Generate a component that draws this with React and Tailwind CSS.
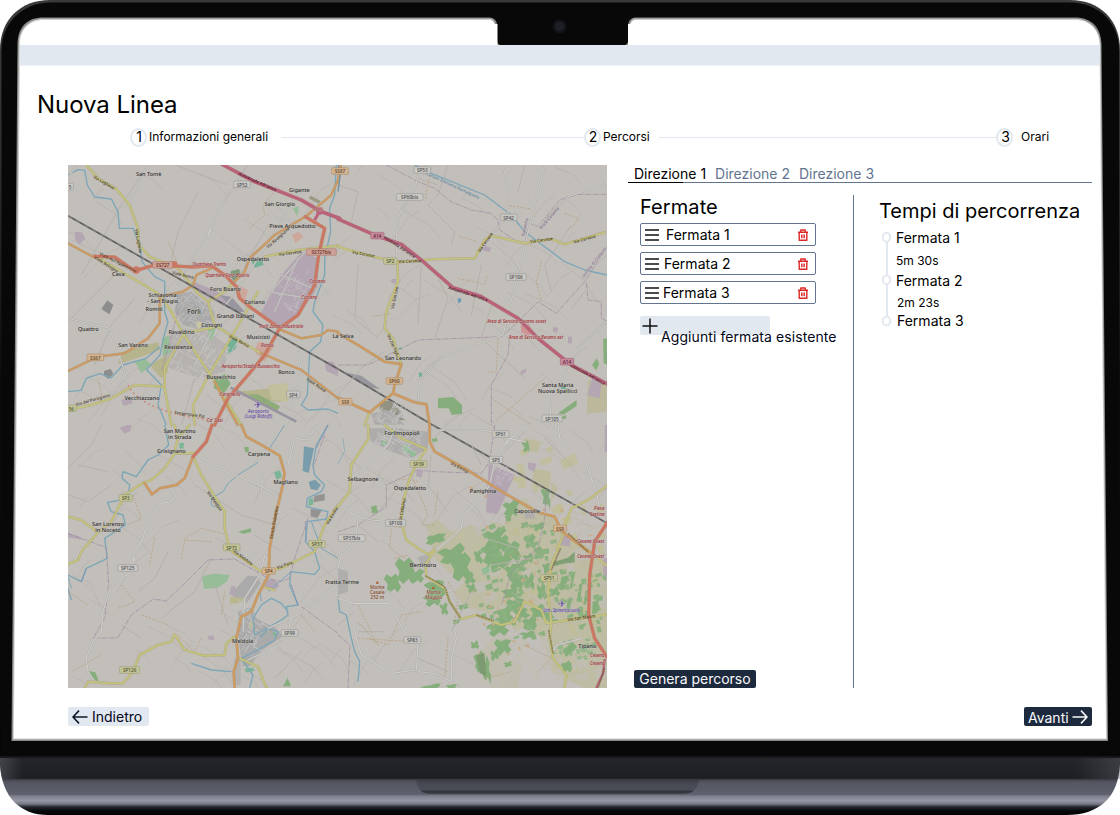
import React from "react";

/* ---------- Map ---------- */

const YELLOW = "#c3c27c";
const ORANGE = "#cd9a62";
const RED = "#cc7763";
const MOTORWAY = "#bb627b";
const WATER = "#7ba6b8";
const GREEN = "#86ae7c";

function rng(seed) {
  let s = seed;
  return () => {
    s = (s * 16807) % 2147483647;
    return s / 2147483647;
  };
}

function blob(x, y, w, h, r) {
  const outline = [
    [-1, -0.6], [-0.5, -0.9], [-0.1, -0.55], [0.5, -1], [1, -0.5], [0.65, 0],
    [1, 0.55], [0.4, 1], [0.1, 0.6], [-0.5, 0.95], [-0.95, 0.5], [-0.6, 0],
  ];
  return outline
    .map(([a, b]) => {
      const k = 0.75 + r() * 0.4;
      const px = (a * w * k) / 2;
      const py = (b * h * k) / 2;
      return `${(x + px + py * 0.15).toFixed(1)},${(y + py - px * 0.2).toFixed(1)}`;
    })
    .join(" ");
}

function parcel(x, y, w, h, t) {
  const c = Math.cos(t);
  const s = Math.sin(t);
  return [[-w, -h], [w, -h], [w * 0.8, h], [-w, h * 0.8]]
    .map(([a, b]) => `${(x + (a * c - b * s) / 2).toFixed(1)},${(y + (a * s + b * c) / 2).toFixed(1)}`)
    .join(" ");
}

function parcels(seed, n, x0, y0, x1, y1, size) {
  const r = rng(seed);
  return Array.from({ length: n }, () => {
    const x = x0 + r() * (x1 - x0);
    const y = y0 + r() * (y1 - y0);
    return parcel(x, y, size * (0.5 + r()), size * (0.4 + r() * 0.9), -0.45 + r() * 0.3);
  });
}

function Road({ d, c, w = 7, casing }) {
  return (
    <g fill="none" strokeLinejoin="round" strokeLinecap="round">
      <path d={d} stroke={casing || "#9c8f72"} strokeWidth={w + 2} opacity="0.55" />
      <path d={d} stroke={c} strokeWidth={w} />
    </g>
  );
}

function Minor({ d, w = 5 }) {
  return (
    <g fill="none" strokeLinejoin="round" strokeLinecap="round">
      <path d={d} stroke="#aaa8a6" strokeWidth={w + 2} />
      <path d={d} stroke="#cfcecb" strokeWidth={w} />
    </g>
  );
}

const Water = ({ d, w = 4 }) => <path d={d} fill="none" stroke={WATER} strokeWidth={w} strokeLinejoin="round" />;
const Lane = ({ d }) => <path d={d} fill="none" stroke="#b4b1ad" strokeWidth="3" />;
const Track = ({ d }) => <path d={d} fill="none" stroke="#b39b72" strokeWidth="1.8" strokeDasharray="7 4" />;
const Border = ({ d }) => <path d={d} fill="none" stroke="#a18fa4" strokeWidth="2.5" strokeDasharray="14 3 4 3" />;

function Label({ x, y, children, s = 17, c = "#2e2e2e", rot = 0, italic }) {
  return (
    <text
      x={x}
      y={y}
      textAnchor="middle"
      dominantBaseline="central"
      fontSize={s}
      fontStyle={italic ? "italic" : "normal"}
      fill={c}
      stroke="#c8c5c0"
      strokeWidth="1.5"
      paintOrder="stroke"
      transform={`rotate(${rot} ${x} ${y})`}
    >
      {children}
    </text>
  );
}

function Shield({ x, y, t, c = "#c9c8c4", b = "#8f8f8d", f = "#4b4b4b" }) {
  const w = t.length * 10 + 10;
  return (
    <g>
      <rect x={x - w / 2} y={y - 10} width={w} height="20" rx="3" fill={c} stroke={b} strokeWidth="1.5" />
      <text x={x} y={y + 1} textAnchor="middle" dominantBaseline="central" fontSize="14" fill={f}>
        {t}
      </text>
    </g>
  );
}
const yel = { c: "#c3c49a", b: "#94966a", f: "#4d4f2a" };
const org = { c: "#d2b493", b: "#a98258", f: "#5b3d1c" };
const pnk = { c: "#cfa096", b: "#a97368", f: "#5d2a20" };
const mag = { c: "#c58b9c", b: "#a35f76", f: "#5c1b33" };

function fieldLanes() {
  const r = rng(77);
  const out = [];
  for (let i = 0; i < 210; i++) {
    const x = r() * 1617;
    const y = r() * 1569;
    const steep = r() > 0.5;
    const l = 30 + r() * 75;
    const a = steep ? -1.1 + r() * 0.3 : 0.4 + r() * 0.3;
    const x2 = x + Math.cos(a) * l;
    const y2 = y + Math.sin(a) * l;
    const x3 = x2 + Math.cos(a + 0.4) * l * 0.6;
    const y3 = y2 + Math.sin(a + 0.4) * l * 0.6;
    out.push(`M${x.toFixed(0)} ${y.toFixed(0)}L${x2.toFixed(0)} ${y2.toFixed(0)}L${x3.toFixed(0)} ${y3.toFixed(0)}`);
  }
  return out.join("");
}

function cityGrid(cx, cy, rx, ry, n, seed) {
  const r = rng(seed);
  let d = "";
  for (let i = 0; i < n; i++) {
    const a = r() * 6.28;
    const q = Math.sqrt(r());
    const x = cx + Math.cos(a) * rx * q;
    const y = cy + Math.sin(a) * ry * q;
    const l = 10 + r() * 22;
    const t = r() > 0.5 ? -1.0 : 0.5;
    d += `M${x.toFixed(0)} ${y.toFixed(0)}l${(Math.cos(t) * l).toFixed(0)} ${(Math.sin(t) * l).toFixed(0)}`;
  }
  return d;
}

const woods = [
  [291, 342, 60, 32], [345, 390, 90, 56], [370, 430, 56, 76], [205, 435, 54, 74], [165, 475, 48, 56],
  [235, 455, 44, 36], [290, 490, 60, 52], [285, 525, 50, 35], [318, 553, 22, 36], [470, 340, 62, 54],
  [465, 385, 55, 60], [480, 415, 60, 34], [520, 380, 60, 70], [495, 350, 40, 40], [575, 352, 34, 40],
  [602, 305, 34, 24], [560, 300, 22, 20], [520, 250, 44, 44], [510, 280, 20, 22], [625, 215, 24, 60],
  [400, 490, 26, 28], [395, 460, 30, 34], [520, 440, 34, 38], [545, 425, 38, 28], [535, 470, 44, 44],
  [575, 470, 30, 48], [520, 505, 48, 34], [530, 540, 54, 40], [550, 565, 48, 34], [500, 570, 44, 44],
  [480, 610, 64, 44], [575, 595, 44, 40], [600, 560, 44, 40], [630, 570, 30, 30], [610, 500, 26, 48],
  [650, 500, 30, 28], [495, 665, 48, 48], [425, 710, 34, 60], [445, 735, 26, 74], [410, 660, 26, 22],
  [470, 690, 26, 30], [685, 725, 38, 34], [570, 630, 44, 22], [375, 545, 28, 16], [600, 385, 30, 40],
  [355, 590, 20, 14], [510, 718, 24, 16], [565, 65, 20, 34], [108, 253, 20, 28], [290, 45, 18, 12],
  [570, 400, 30, 26], [625, 430, 22, 34], [280, 785, 60, 14], [340, 785, 30, 14], [420, 395, 22, 40],
];

function MapView() {
  const r = rng(9);
  return (
    <svg
      viewBox="0 0 1617 1569"
      className="h-[523px] w-[539px] shrink-0 bg-[#c2beb9] font-['Noto_Sans',sans-serif] font-medium"
    >
      <rect width="1617" height="1569" fill="#c2beb9" />
      <path d={fieldLanes()} fill="none" stroke="#b7b4b0" strokeWidth="2.5" />

      {/* land use */}
      <g>
        <path d="M328 388L372 380L440 440L436 480L390 492L345 480L320 440Z" fill="#aaa9aa" />
        <path d="M290 520L345 490L420 500L480 540L470 620L400 640L330 620L285 600Z" fill="#b5b2b0" />
        <path d="M700 262L752 280L748 370L700 440L640 488L575 450L640 330Z" fill="#b3a5b2" />
        <path d="M380 352L445 378L520 432L500 440L370 370Z" fill="#b3a5b2" />
        <path d="M455 390L490 395L530 440L505 442Z" fill="#9897a0" />
        <path d="M20 200L42 202L52 220L35 238L22 226Z" fill="#b3a5b2" />
        <path d="M510 360L540 375L530 410L505 395Z M570 530L620 540L590 590L560 560Z M672 210l20-10l14 16l-24 18z" fill="#cda79c" />
        <path d="M150 598L165 560L270 530L276 555L190 585Z M245 600L295 570L300 620L280 640Z M500 680L620 670L640 712L560 700Z" fill="#b6b48c" />
        <path d="M600 660l60-6l0 56l-50-6z" fill="#c1bf9c" />
        <path d="M490 318l24-6l4 24l-18 14l-16-18z" fill="#7e9b7e" />
        <path d="M548 285l34-3l4 18l-26 8z M478 530l30-16l-4 36l-24 18z" fill="#72b297" />
        <path d="M284 518l18-6l6 50l-24 12z M420 495l24-10l-10 40l-14 0z M674 130l18-6l-4 30z M200 590l30-10l20 20l-30 24z" fill="#97bd98" />
        <path d="M440 642l30-16l18 30l-20 28l-30-14z" fill={GREEN} />
        <path d="M540 688l30 0l66 36l-10 16l-60-28z" fill="#8fab78" />
        <path d="M380 470l26 2l-14 24z" fill="#c9c6a0" />
        <path d="M108 618l20-6l8 14l-14 16l-14-10z M100 432l18-26l18 14l-12 28z" fill="#8d8d8d" />
        <path d="M488 668L685 770" stroke="#96959f" strokeWidth="8" />
        <path d="M725 96l30 16" stroke="#9b9a86" strokeWidth="10" />
        <path d="M160 705l30-6l4 16l-28 8z M770 590l24 0l16 20v24l-36-16z" fill="#b3a5b2" />
      </g>

      <g transform="translate(810 0)">
        <path d="M300 700l46-4l26 24v26l-30 4l-10-20h-32z" fill={GREEN} />
        <path d="M750 645l57 15v80l-60 6z" fill="#bbb89c" />
        <path d="M795 522l12-2v80l-10-6z M762 600l14-20l8 16l-10 20z" fill={GREEN} />
        <path d="M762 640l30 10l-8 50l-36-10z" fill="#b5a6b3" />
        <path d="M660 745l56-40v18l-40 26z M664 760l20-10v12z" fill={GREEN} />
        <path d="M125 712l30-6l30 30l18 30l-22-2l-56-30z" fill="#929283" />
        <path d="M20 622l50 10l56 40l-30-4z" fill="#98979d" />
        <path d="M100 745l60-10l40 44h-90z" fill="#adabaa" />
        <path d="M548 482l24-4l14 20l-14 14l-22-10z" fill="#cf9494" />
        <path d="M358 402l10-4l2 10l-8 8z" fill="#6a9db5" />
        <path d="M160 342h14v12h-14z M440 242l20 6l-6 14l-20-6z M645 485l16 4l-4 14l-12-2z M690 515h12v20h-12z M548 618l18-8l-4 14l-14 6z" fill="#b3a5b2" />
        <path d="M242 624l8-2l2 12l-8 2z M180 550l10-3l2 8z M668 660l16 4v8l-14 0z" fill="#6cae94" />
      </g>

      <g transform="translate(0 780)">
        <path d="M402 454L440 446L486 450L476 470L450 488L408 492Z" fill="#97bd98" />
        <path d="M538 452l30 2l10 20l-40 60l-36-10l-10-20z M510 560l40-16l14 36l60 30l20 24l-60 40l-40 50h-20l-10-60z" fill="#abaaab" />
        <path d="M590 465l30-2l14 20l-16 14l-26-8z M490 484l12 0l-4 30l-14-6z M420 632h18v12h-16z M155 8l24-8h12l-4 18l-18 8z M0 325l30 8l20 12l-50-8z" fill="#b3a5b2" />
        <path d="M486 515l40 4v16h-40z M545 590l14-4l-4 24h-14z" fill="#b9b78e" />
        <path d="M510 320l38-10l2 10l-24 6z M62 738l20 4l10 26l-20-4z M645 784l14-26l10 26z M528 66l14 0v16l-10 0z" fill={GREEN} />
        <path d="M708 64l30 6l-16 74l-18-6z M722 170l20-6l16 16l-10 16l-20-4z" fill="#7a9dac" />
        <path d="M740 212l30-6v20l-34 6z M728 252l34 2l-14 26l-20-6z" fill="#959391" />
        <path d="M618 142l18-6l6 20l-16 8z M722 222l12-4l2 20l-14 6z M612 620l18 6l-8 14z M334 54l14 0l-2 18l-12-2z M530 730l26-2l4 10l-26 4z" fill="#7bb597" />
        <path d="M498 700h20v80h-22z" fill="#b3b1b0" />
      </g>

      <g transform="translate(810 780)">
        <path d="M265 300L300 285L340 320L400 300L440 320L460 290L500 300L510 240L560 220L600 262L650 275L690 330L807 430V789H740L640 740L620 650L560 600L540 620L500 590L440 560L380 545L350 500L380 470L330 440L290 400Z" fill="#bdbb9e" opacity="0.8" />
        <path d="M460 640L500 620L520 640L510 700L550 720L540 789H460L420 700Z" fill="#bdbb9e" opacity="0.4" />
        <path d="M560 40l50 10l-10 30l-40 0z M590 130l50 10l-10 70l-50-40z M640 170l20 20l-20 40z" fill="#bbb996" opacity="0.8" />
        {parcels(41, 70, 420, 300, 800, 780, 30).map((p, i) => (
          <polygon key={`g${i}`} points={p} fill="#c0bdb4" opacity="0.75" />
        ))}
        {parcels(43, 40, 520, 60, 800, 640, 26).map((p, i) => (
          <polygon key={`y${i}`} points={p} fill="#bfbe93" opacity="0.7" />
        ))}
        <path d="M90 10l90 0l90 10v50l-50 30l-60-20l-60-30z" fill="#adacab" />
        <path d="M0 430l30 10v60l-30 10z M560 255h30v26h-30z M240 395l30-6l10 30l-30 6z" fill="#b0aeac" />
        <path d="M452 115L530 150L478 268L444 262Z M670 330l30 6l-6 30l-26-6z M236 135l20 4l-6 20l-16-6z M796 400h11v60h-11z M800 0h7v80h-7z M570 112l26 4l-8 24l-18-8z" fill="#b3a5b2" />
        <path d="M192 62l20-4l6 24l-22 4z M218 76l18 4l-4 14h-14z M130 50l16-6v14l-14 4z M430 432l24-10v20l-18 8z" fill="#90bd95" />
        {woods.map((b, i) => (
          <polygon key={i} points={blob(b[0], b[1], b[2] * 1.1, b[3] * 1.1, r)} fill={GREEN} />
        ))}
        {parcels(51, 80, 430, 300, 660, 640, 14).map((p, i) => (
          <polygon key={`s${i}`} points={p} fill="#8bb181" />
        ))}
        {parcels(57, 46, 660, 440, 800, 620, 15).map((p, i) => (
          <polygon key={`t${i}`} points={p} fill="#8cb180" />
        ))}
        {parcels(59, 24, 650, 640, 780, 700, 12).map((p, i) => (
          <polygon key={`u${i}`} points={p} fill="#95b689" />
        ))}
        {parcels(61, 34, 400, 180, 760, 720, 9).map((p, i) => (
          <polygon key={`o${i}`} points={p} fill="#c9a882" opacity="0.8" />
        ))}
        <path d="M645 412L690 398L710 380V412L668 418L650 424Z" fill="#809f74" />
        <path d="M670 456l24-6l-16 44l-14 2z M704 440l8 0l-10 50l-8 2z M724 478l10-4l-8 52l-10 4z M742 498l8-4l-6 44l-8 2z M764 530l18-6l-4 40l-16 4z M690 520l12-4l-6 36l-12 4z M674 676l30-24l14 14l-34 30z" fill={GREEN} />
        <path d="M415 690l24-6l6 70l-20-10z" fill="#7d9a70" />
      </g>

      {/* north-west quadrant */}
      <g>
        <path d={cityGrid(375, 440, 60, 60, 80, 3)} stroke="#bdbcba" strokeWidth="2.5" />
        <path d={cityGrid(400, 580, 110, 90, 110, 5)} stroke="#c5c3c1" strokeWidth="2.5" />
        <path d={cityGrid(670, 370, 60, 70, 36, 8)} stroke="#c1b9c0" strokeWidth="3" />
        <Lane d="M240 0L160 120L40 330M0 470L140 330M320 0L480 60M390 80L330 200L300 330M540 0L470 110M600 180L510 340M80 600L130 480L200 400M340 780L380 640" />
        <Border d="M330 440L280 620" />
        <Water w={4} d="M0 30L30 14L50 16L58 60L80 96L130 102L150 140L154 190L195 190L215 240L222 290L260 335L290 350L290 440L300 470L286 520L276 570L236 614L280 660L270 720L295 780" />
        <Water d="M0 680L40 676L55 640L95 626L130 638L165 600L235 580L275 545M805 0L800 90L785 130L788 200L770 280L770 330L740 410L735 440L765 480L758 530L725 560L718 690L700 720L720 735L780 732L810 745" />
        <Track d="M545 190L590 150L585 120L620 80M300 230L330 300M90 640L100 690" />
        <Minor d="M240 0L205 70L170 130M25 0L0 40M500 0L520 60L470 90L440 170L420 215L428 190L330 360M0 460L60 475L125 490L170 620L180 670M695 80L520 360L410 500M720 250L560 440M690 560L700 620L670 720M380 600L430 500" w={3} />
        <Minor d="M640 330L745 375M600 380L720 400M690 280L620 440M600 150L760 190" w={2.5} />
        <path d="M180 660Q220 740 430 765" fill="none" stroke="#cf7d70" strokeWidth="4" strokeDasharray="5 9" />
        <Road d="M55 0L90 40L145 72L185 120L210 190L212 240L245 275L330 310L390 385L420 410L440 480L520 530L580 565" c={YELLOW} w={6} />
        <Road d="M80 272L160 320L275 388L310 440L345 505L430 635L520 780M345 505L440 487M570 380L420 635L375 720L380 780M345 510L290 610L290 670L310 780M0 735L70 720L130 700L200 660L290 665M420 410L470 380L490 360M590 275L690 255L810 242" c={YELLOW} w={6} />
        <Road d="M0 235L80 278M275 395L345 380L375 360L385 330L430 310M275 395L275 475L240 520L170 565L90 575L0 618M500 350L530 320L545 280L620 210L712 155L790 90L808 50M580 565L700 615L810 700M440 650L470 710L510 780M640 495L700 520L760 510L780 495L810 500" c={ORANGE} w={6} />
        <Road d="M80 274L140 276L200 318L260 300L375 306L430 302L470 330L505 365L515 400L545 425L635 490L690 450L740 360L752 270L770 190L712 155M635 490L590 570L540 630L480 700L440 780" c={RED} w={9} />
        <Road d="M455 -6L560 50L700 105L760 140L815 160" c={MOTORWAY} w={10} />
        <circle cx="755" cy="138" r="11" fill={MOTORWAY} />
        <path d="M755 138L740 165" stroke={MOTORWAY} strokeWidth="9" />
        <circle cx="318" cy="298" r="10" fill={RED} />
        <circle cx="205" cy="315" r="11" fill={RED} />
      </g>

      {/* railway across both northern quadrants and the south-east */}
      <path d="M0 152L810 612L1090 778L1620 1076" fill="none" stroke="#5d5d5d" strokeWidth="5" />
      <path d="M0 152L810 612L1090 778L1620 1076" fill="none" stroke="#9c9b99" strokeWidth="2" strokeDasharray="14 14" />

      {/* north-east quadrant */}
      <g transform="translate(810 0)">
        <path d={cityGrid(150, 750, 50, 30, 50, 12)} stroke="#c3c2c0" strokeWidth="2.5" />
        <Lane d="M0 60L60 80L40 170M330 0L300 90L270 120L350 200L340 240M240 40L300 60M60 300L50 460L120 520M250 300L240 480M300 340L330 400L290 520M430 300L400 450M460 420L430 520L560 640M560 0L540 80M700 180L620 300L640 380M740 380L700 430M0 690L80 600L140 560" />
        <Water d="M230 0L280 25L440 90L520 150L560 200L680 290L740 315L807 330" />
        <Border d="M145 0L240 50L290 70L340 110L400 135L460 145L480 165L485 195L530 225L560 235L575 175L600 185L665 105L720 88L807 88M0 600L90 600L240 525L490 515L530 480L600 410L655 445L740 350L810 240M515 510L510 570L460 660L460 780M745 355L750 405L790 410V460L810 470" />
        <Track d="M275 30L262 100M515 122L580 132M680 145L722 160L700 190M360 340L440 358L450 330M365 215L420 230M610 290L595 350L610 410M480 520L475 620L450 622M105 455L160 445M620 640L460 780M460 700L580 780" />
        <Minor d="M285 0L265 25L240 30L225 95L190 130L175 190L175 280M495 0L510 80V150L460 210M620 0L580 160L495 510L310 575L245 645L240 705M807 55L690 95L600 185M807 470L722 545L640 700L635 780" w={3} />
        <Road d="M0 245L80 268L175 292L300 282L410 280L440 225L460 212L560 235L640 222L680 238L800 202M178 292L180 350L145 440L140 490L165 520L190 600M95 740L80 780" c={YELLOW} w={6} />
        <Road d="M0 505L60 540L140 590L190 598L170 660L165 685L95 742L0 698M165 685L230 712L265 718L275 780M8 0L0 50" c={ORANGE} w={7} />
        <Road d="M0 162L110 210L190 238L250 285L345 368L430 395L540 460L600 520L700 600L810 658" c={MOTORWAY} w={10} />
        <path d="M0 0L8 20L0 80" stroke="#6f92a5" fill="none" strokeWidth="4" />
      </g>

      {/* south-west quadrant */}
      <g transform="translate(0 780)">
        <path d={cityGrid(540, 600, 50, 90, 80, 21)} stroke="#c3c2c1" strokeWidth="2.5" />
        <Lane d="M0 130L70 60L100 0M0 210L60 230L130 180M30 120L120 140M380 180L520 270L620 300M300 380L260 460L210 500M430 400L380 500L280 580M440 480L480 600M640 380L560 330M700 680L620 760M560 180L640 210M220 640L160 600" />
        <Water w={4} d="M290 0L302 60L270 90L240 105L205 155L165 140L162 160L185 180L180 215L145 228L118 232L130 260L165 270L172 300L110 340L118 400L55 430L40 470L0 450M10 525L0 490M780 0L745 60L735 120L740 150L770 180L760 200L718 220L715 245L780 260L775 282L718 290L712 350L740 380L755 430L740 448L668 440L665 480L690 540L655 545L660 570L640 585L560 630L555 580L580 540L610 520L640 535L660 560M575 640L600 610L630 620L620 645L560 680L520 700L555 750L545 789M370 715L430 735L490 740" />
        <Water d="M570 112L510 150L480 175L465 200L430 220L430 240L450 248M650 0L605 70M0 455L10 490M730 290L760 370L810 400M670 440L600 500M575 490L580 530" w={3} />
        <path d="M40 470L55 432M712 290L715 350M780 0L745 70M670 480L690 540" stroke="#6f82b3" strokeWidth="3" strokeDasharray="3 3" fill="none" />
        <Border d="M0 325L115 368L122 480L110 580L75 640L150 638L190 570L255 522L295 528L360 465L420 405L500 402L600 460L640 470L665 460L680 400L720 280M770 30L735 130M700 545L810 625" />
        <Track d="M195 210L220 280L180 300M260 340L245 420M350 340L400 310L480 330M160 240L165 200M300 600L220 570M330 630L380 680L400 640M150 550L200 530L160 480M0 500L60 540M10 740L100 690M430 350L350 345L340 400M460 570L470 500M590 600L640 650M700 570L740 620" />
        <Minor d="M385 105L400 110L560 175L630 210M200 395L190 440L140 475L125 490L105 560L100 620L75 650L55 700L60 740L80 770M305 190L325 210L310 230L275 235L235 300L225 340L195 385V450M745 0L720 45L680 40L660 120M585 150L580 200M0 440L40 370M590 390L575 450L530 520L525 620M810 475L700 565L600 610M670 575L655 650L530 710" w={3.5} />
        <Road d="M378 85L320 85L290 130L250 165L222 175L170 210L130 290L90 322L40 380L30 405L0 418M90 322L40 285L0 275M320 0L330 40L318 85M365 0L330 40M378 100L400 150L440 215L470 260L470 310L485 375L530 405L580 440L640 430L740 380L770 300L810 240M500 635L475 655L470 690L410 692L350 675L320 628L310 650L270 660L215 690L195 740L165 775H130L60 770L50 789M515 700L570 725L595 789M590 488L620 495" c={YELLOW} w={6} />
        <Road d="M520 0L535 35L590 65L635 92L650 145L640 200L625 260L605 370L602 450L570 510L550 560L520 575L505 640L510 700L497 740L500 789M375 95L350 160L325 180L275 190L252 208L230 175" c={ORANGE} w={7} />
        <Road d="M432 0L415 50L375 95" c={RED} w={9} />
      </g>

      {/* south-east quadrant */}
      <g transform="translate(810 780)">
        <path d={cityGrid(175, 50, 80, 40, 80, 31)} stroke="#c4c3c1" strokeWidth="2.5" />
        <path d={cityGrid(490, 150, 30, 40, 20, 32)} stroke="#c3bbc2" strokeWidth="2.5" />
        <path d={cityGrid(640, 420, 150, 180, 90, 33)} stroke="#bbb4a5" strokeWidth="2" />
        <Lane d="M10 80L70 130M60 300L120 350M170 200L130 250M280 90L270 180L330 260M400 60L430 120M560 20L500 80M620 40L700 120M0 600L50 560M140 620L60 620M240 700L330 740M400 500L340 620M440 340L540 370M460 420L580 400M740 200L700 240" />
        <Water w={4} d="M0 515L5 560L25 570L40 640L50 680L65 710L60 770" />
        <Water d="M0 115L20 80L15 40" w={2} />
        <Border d="M470 0L455 110L430 145L290 140L240 135L145 180V245L60 300L0 320M625 200L620 280L600 370L520 440L490 540M0 630L36 660L30 789" />
        <Track d="M220 150L270 270L250 300L290 300M240 170L180 160M150 300L200 310M290 270L300 200M60 540L120 660L60 590M250 560L190 570L150 660L90 640M60 640L230 650M330 470L360 520L350 600M160 310L155 370L200 400M530 380L600 420M560 660L640 700L600 740M440 760L520 740M330 640L320 760M170 400L210 390" />
        <Minor d="M270 15H430L490 25M560 0L500 60L470 110L455 180L430 220L375 270L370 310L320 355L280 385M0 238L60 275L100 285L150 290M170 10L150 60L100 110L40 160M660 0L665 40L740 105L775 200L785 250M0 520L45 535L150 535L210 640L240 660L235 735L160 745L70 690L45 600V540M240 740L290 745L340 770V700L355 640L350 610L370 590M500 60L510 40L560 50M60 290L50 360L10 390L0 430M630 690L660 660L730 640" w={3.5} />
        <Road d="M90 0L92 40L40 120L35 200L0 245M140 0L190 40L265 72L240 110L215 160L195 230L190 290L205 345L240 370L270 388L290 375L262 420L265 455L320 490L335 530L370 582L415 570L490 600L530 590L560 530L610 555L625 595L810 568M810 180L750 225L700 250L685 290L672 340L640 420L630 500L640 595L635 640L645 700L685 750L680 789M690 330L750 375L810 425" c={YELLOW} w={6} />
        <Road d="M275 0V50L290 80L380 130L500 205L600 262L650 275L672 320L755 383" c={ORANGE} w={7} />
        <Road d="M810 290L770 350L755 450L752 570L770 640L810 700" c={RED} w={9} />
        <Road d="M800 705L795 745L775 789" c={MOTORWAY} w={6} />
        <path d="M262 452L320 485L335 530L368 580M415 570L468 588M690 325L750 380M668 370L640 435M632 615L645 685M800 730L780 789" fill="none" stroke="#6b5d3a" strokeWidth="5" strokeDasharray="6 1.5" opacity="0.6" />
      </g>

      {/* labels */}
      <g>
        {[
          [242, 26, "San Tomè"], [694, 76, "Gigante"], [635, 118, "San Giorgio"], [673, 184, "Pieve Acquedotto"],
          [555, 282, "Ospedaletto"], [151, 328, "Cava"], [284, 389, "Schiavonia"], [284, 408, "- San Biagio"],
          [258, 433, "Romiti"], [472, 372, "Foro Boario"], [560, 412, "Coriano"], [502, 454, "Grandi Italiani"],
          [61, 491, "Quattro"], [340, 501, "Ravaldino"], [431, 481, "Cotogni"], [571, 516, "Musicisti"],
          [195, 541, "San Varano"], [331, 545, "Resistenza"], [459, 637, "Bussecchio"], [655, 622, "Ronco"],
          [222, 699, "Vecchiazzano"], [825, 513, "La Selva"], [1005, 580, "San Leonardo"], [1469, 659, "Santa Maria"],
          [1469, 677, "Nuova Spallicci"], [335, 798, "San Martino"], [335, 817, "in Strada"], [310, 857, "Grisignano"],
          [573, 868, "Carpena"], [653, 952, "Magliano"], [120, 1076, "San Lorenzo"], [120, 1095, "in Noceto"],
          [524, 1428, "Meldola"], [885, 942, "Selbagnone"], [1026, 969, "Ospedaletto"], [1245, 978, "Panighina"],
          [1377, 1038, "Capocolle"], [822, 1251, "Fratta Terme"], [1558, 1443, "Tipano"],
        ].map(([x, y, t]) => (
          <Label key={t + y} x={x} y={y} s={16.5}>{t}</Label>
        ))}
        <Label x={378} y={439} s={19}>Forlì</Label>
        <Label x={1002} y={804} s={17.5}>Forlimpopoli</Label>
        <Label x={1065} y={1201} s={17.5}>Bertinoro</Label>

        {[
          [424, 298, "Quartiere Trento"], [478, 331, "Quartiere Foro Boario"], [640, 484, "Forlì Zona Industriale"],
          [598, 539, "Ronco"], [548, 602, "Aeroporto/Stadio Bussecchio"], [486, 686, "Carpinello"], [440, 764, "Ca' Ossi"],
          [748, 348, "Coriano"], [724, 395, "Coriano"], [750, 132, "Forlì"], [1346, 468, "Area di Servizio Bevano ovest"],
          [1404, 516, "Area di Servizio Bevano est"], [1568, 1128, "Cesena Ovest"], [1568, 1173, "Cesena Ovest"],
          [1588, 1470, "Cesena"], [1588, 1494, "Cesena"], [1594, 1030, "Pieve"], [1588, 1047, "Sestina"],
        ].map(([x, y, t], i) => (
          <Label key={i} x={x} y={y} s={13.5} c="#a0282e" italic>{t}</Label>
        ))}
        <Label x={571} y={719} s={26} c="#6a4fae">✈</Label>
        <Label x={571} y={738} s={14} c="#5f45a8" italic>Aeroporto</Label>
        <Label x={571} y={752} s={14} c="#5f45a8" italic>(Luigi Ridolfi)</Label>
        <Label x={1481} y={1318} s={26} c="#6a4fae">✈</Label>
        <Label x={1481} y={1335} s={13} c="#5f45a8" italic>Urb. Spinettiscuola</Label>

        {[[928, 1266, "Monte"], [928, 1281, "Casale"], [928, 1296, "252 m"], [1097, 1281, "Monte"], [1097, 1296, "Maggio"]].map(([x, y, t]) => (
          <Label key={x + t} x={x} y={y} s={14} c="#85472a">{t}</Label>
        ))}
        <path d="M923 1256l5-9l5 9z M1091 1272l5-9l5 9z" fill="#b05c28" />

        {[
          [108, 52, 30, "Via Lughese"], [212, 228, 80, "Via Lughese"],
          [115, 298, 32, "Viale Bologna"], [150, 292, 26, "Viale dell'Appennino"], [345, 330, 14, "Viale Roma"],
          [630, 218, -42, "Via Ravegnana"], [666, 264, -8, "Via Cervese"], [513, 528, 28, "Viale Roma"],
          [745, 660, 34, "Viale Roma"], [75, 704, -16, "Via del Partigiano"], [365, 748, 8, "Tangenziale Est"],
          [887, 267, 10, "Via Cervese"], [1026, 288, -2, "Via Cervese"], [1252, 232, -55, "Via Cervese"],
          [1420, 225, -8, "Via Cervese"], [1550, 222, -16, "Via Cervese"], [980, 398, -78, "Via San Leo"],
          [975, 540, 66, "Via Dei Tigli"], [440, 1008, 55, "Via Meldola"], [618, 1072, -80, "Strada Bidentina"],
          [525, 1177, 36, "Via Meldola"], [650, 1200, -20, "Via Para"], [792, 1052, -60, "Via Emilia"],
          [1174, 907, 28, "Via Emilia"], [1002, 1035, -78, "Via Cellaimo"], [1540, 1358, -8, "Via San Mauro"],
        ].map(([x, y, rot, t], i) => (
          <text
            key={i}
            x={x}
            y={y}
            textAnchor="middle"
            dominantBaseline="central"
            fontSize="12.5"
            fill="#443722"
            transform={`rotate(${rot} ${x} ${y})`}
          >
            {t}
          </text>
        ))}
        {[[568, 50, 24], [990, 242, 33], [1200, 386, 18], [1556, 626, 29]].map(([x, y, rot]) => (
          <text
            key={x}
            x={x}
            y={y}
            textAnchor="middle"
            dominantBaseline="central"
            fontSize="12.5"
            fill="#3d1424"
            transform={`rotate(${rot} ${x} ${y})`}
          >
            Autostrada Adriatica
          </text>
        ))}
        <Label x={1155} y={60} rot={25} s={13} c="#4f8099">Canale Emiliano Romagnolo</Label>
        <Label x={1443} y={158} rot={-50} s={14} c="#80698a">Forlì-Cesena</Label>
        <Label x={1369} y={186} rot={-78} s={13} c="#80698a">Ravenna</Label>
        <Label x={1576} y={292} rot={-52} s={13} c="#80698a">Unione di Comuni</Label>

        <Shield x={522} y={58} t="SP52" />
        <Shield x={284} y={300} t="SS727" {...pnk} />
        <Shield x={760} y={261} t="SS727bis" {...pnk} />
        <Shield x={82} y={577} t="SS67" {...org} />
        <Shield x={816} y={18} t="SS67" {...org} />
        <Shield x={676} y={688} t="SP4" />
        <Shield x={10} y={730} t="56" {...yel} />
        <Shield x={6} y={65} t="5" />
        <Shield x={1063} y={15} t="SP53" />
        <Shield x={1025} y={96} t="SP60bis" />
        <Shield x={928} y={212} t="A14" {...mag} />
        <Shield x={1322} y={157} t="SP42" />
        <Shield x={967} y={288} t="SP2" {...yel} />
        <Shield x={1344} y={336} t="SP106" />
        <Shield x={1497} y={590} t="A14" {...mag} />
        <Shield x={979} y={648} t="SP60" {...org} />
        <Shield x={832} y={710} t="SS9" {...org} />
        <Shield x={1452} y={760} t="SP105" />
        <Shield x={173} y={999} t="SP3" {...yel} />
        <Shield x={179} y={1209} t="SP125" />
        <Shield x={491} y={1147} t="SP72" {...yel} />
        <Shield x={747} y={1137} t="SP37" {...yel} />
        <Shield x={602} y={1218} t="SP4" {...org} />
        <Shield x={665} y={1404} t="SP99" />
        <Shield x={185} y={1515} t="SP126" {...yel} />
        <Shield x={1298} y={807} t="SP61" />
        <Shield x={1284} y={884} t="SP5" />
        <Shield x={1052} y={897} t="SP39" {...yel} />
        <Shield x={983} y={1074} t="SP100" />
        <Shield x={851} y={1119} t="SP37bis" />
        <Shield x={1476} y={1090} t="SS9" {...org} />
        <Shield x={1443} y={1239} t="SP51" {...yel} />
        <Shield x={1033} y={1425} t="SP83" />
      </g>
    </svg>
  );
}

/* ---------- Laptop frame ---------- */

function Laptop() {
  return (
    <svg viewBox="0 0 1120 815" className="absolute inset-0 h-[815px] w-[1120px]" aria-hidden="true">
      <defs>
        <linearGradient id="rim" x1="0" y1="0" x2="0" y2="758" gradientUnits="userSpaceOnUse">
          <stop offset="0" stopColor="#3a3a3a" />
          <stop offset="0.2" stopColor="#303030" />
          <stop offset="0.5" stopColor="#0c0c0c" />
          <stop offset="1" stopColor="#060606" />
        </linearGradient>
        <linearGradient id="base" x1="0" y1="756" x2="0" y2="815" gradientUnits="userSpaceOnUse">
          <stop offset="0" stopColor="#111113" />
          <stop offset="0.05" stopColor="#242528" />
          <stop offset="0.38" stopColor="#1e1f22" />
          <stop offset="0.4" stopColor="#3f414a" />
          <stop offset="0.44" stopColor="#535661" />
          <stop offset="0.65" stopColor="#5e616d" />
          <stop offset="0.68" stopColor="#7e818d" />
          <stop offset="0.76" stopColor="#9598a4" />
          <stop offset="0.82" stopColor="#6f737f" />
          <stop offset="0.84" stopColor="#454952" />
          <stop offset="0.87" stopColor="#20252b" />
          <stop offset="0.93" stopColor="#06080a" />
          <stop offset="1" stopColor="#000" />
        </linearGradient>
        <linearGradient id="lip" x1="0" y1="779" x2="0" y2="794" gradientUnits="userSpaceOnUse">
          <stop offset="0" stopColor="#383a42" />
          <stop offset="0.3" stopColor="#464952" />
          <stop offset="0.7" stopColor="#4b4e59" />
          <stop offset="0.85" stopColor="#2f3138" />
          <stop offset="1" stopColor="#454852" />
        </linearGradient>
        <linearGradient id="sheen" x1="0" x2="1">
          <stop offset="0" stopColor="#60646d" stopOpacity="0.5" />
          <stop offset="0.02" stopColor="#60646d" stopOpacity="0" />
          <stop offset="0.96" stopColor="#60646d" stopOpacity="0" />
          <stop offset="1" stopColor="#60646d" stopOpacity="0.4" />
        </linearGradient>
      </defs>
      <path d="M0 758V50C0 20 20 0 50 0H1070C1100 0 1120 20 1120 50V758Z" fill="url(#rim)" />
      <path d="M1.500 758V50C1.500 22 24 2.500 50 2.500H1070C1098 2.500 1119 22 1119 50V758Z" fill="#080808" />
      <path d="M0 756H1120V765C1118 797 1100 815 1066 815H48C20 815 2 797 0 765Z" fill="url(#base)" />
      <path d="M0 758H1120V779H2Q0 770 0 758Z" fill="url(#sheen)" />
      <path d="M416 779H699C698 789 692 794 684 794H430C422 794 417 789 416 779Z" fill="url(#lip)" />
      <path d="M17.500 44C18 26 28 17.500 43 17.500H490Q496 18 497 24V40Q497 45 502 45H623Q628 45 628 40V24Q629 18 635 17.500H1075C1092 17.500 1101 28 1101.500 44L1108 741H11.500Z" fill="#8a8a88" />
      <path d="M18.800 44C18.800 29 29 18.800 44 18.800H490Q494 19 495 25V45H630V25Q631 19 635 18.800H1075C1090 18.800 1100 30 1100.500 44L1107 739.500H12.800Z" fill="#cfcfcd" />
      <path d="M20 44C20 29 30 20 44 20H490Q494 21 495 25V45H630V25Q631 21 635 20H1075C1090 20 1099 30 1099.500 44L1106 738.500H13.800Z" fill="#fff" />
      <path d="M491 17.500Q497.500 19 497.500 25V40Q497.500 45 502 45H623Q628 45 628 40V25Q628 19 634 17.500V10H491Z" fill="#080808" />
      <path d="M495 24H497.500V45H495Z M628 24H630.500V45H628Z" fill="#fff" />
      <circle cx="559.5" cy="26.500" r="7" fill="#131418" />
      <circle cx="559.5" cy="26.500" r="4.500" fill="#1e2027" />
      <path d="M20 45H1100V65.500H19.500Z" fill="#e2e8f0" />
    </svg>
  );
}

/* ---------- Interface ---------- */

function StepDot({ n, nudge = "" }) {
  return (
    <span className="flex h-[19px] w-[17px] shrink-0 items-center justify-center rounded-[50%] border-2 border-slate-200 text-sm leading-none">
      <span className={nudge}>{n}</span>
    </span>
  );
}

function Stepper() {
  return (
    <div className="mt-[7px] ml-[130px] flex h-5 items-center text-xs">
      <StepDot n="1" nudge="ml-px" />
      <span className="ml-0.5 w-[132px]">Informazioni generali</span>
      <span className="h-px w-[303px] bg-slate-200" />
      <StepDot n="2" nudge="ml-px" />
      <span className="ml-0.5 w-[56px]">Percorsi</span>
      <span className="h-px w-[337px] bg-slate-200" />
      <StepDot n="3" nudge="ml-0.5" />
      <span className="ml-2">Orari</span>
    </div>
  );
}

function Trash() {
  return (
    <svg viewBox="0 0 12 12" className="h-3 w-3" fill="none" stroke="#dc2626" strokeWidth="1.4" strokeLinejoin="round">
      <path d="M1 3.200H11M3.800 3V1H8.200V3M2.200 3.200V11.200H9.800V3.200" />
      <path d="M4.600 5.500V9.200M6 5.500V9.200M7.400 5.500V9.200" strokeWidth="1" />
    </svg>
  );
}

function StopRow({ name, gap }) {
  return (
    <li className="flex h-[23px] items-center rounded-[2px] border border-slate-500 pr-1.5 pl-1">
      <svg viewBox="0 0 14 12" className="h-3 w-3.5" stroke="#111" strokeWidth="1.5">
        <path d="M0 1H14M0 6H14M0 11H14" />
      </svg>
      <span className={`${gap} flex-1 text-sm leading-none`}>{name}</span>
      <Trash />
    </li>
  );
}

function Timeline() {
  return (
    <div className="mt-2 flex">
      <svg viewBox="0 0 10 96" className="mt-px ml-[2px] h-24 w-2.5 shrink-0" fill="none" stroke="#e2e8f0" strokeWidth="2">
        <path d="M5 10V43M5 53V84" />
        <ellipse cx="4.500" cy="5.300" rx="3.700" ry="4.500" />
        <ellipse cx="4.500" cy="47.700" rx="3.700" ry="4.500" />
        <ellipse cx="4.500" cy="89" rx="3.700" ry="4.500" />
      </svg>
      <div className="ml-1 flex flex-col text-sm leading-none">
        <span className="flex h-[14px] items-center">Fermata 1</span>
        <span className="mt-[9px] flex h-[14px] items-center text-xs">5m 30s</span>
        <span className="mt-1.5 flex h-[14px] items-center">Fermata 2</span>
        <span className="mt-2 ml-px flex h-[14px] items-center text-xs">2m 23s</span>
        <span className="mt-1 ml-px flex h-[14px] items-center">Fermata 3</span>
      </div>
    </div>
  );
}

export default function App() {
  return (
    <div className="relative h-[815px] w-[1120px] overflow-hidden bg-white font-['Inter',sans-serif] font-[388] text-black">
      <Laptop />
      <div className="relative flex flex-col pt-[90px]">
        <h1 className="ml-[37px] flex h-[30px] items-center text-2xl font-[380] tracking-[-0.05px]">Nuova Linea</h1>
        <Stepper />

        <main className="mt-[18px] ml-[68px] flex h-[523px]">
          <MapView />
          <section className="ml-[21px] flex w-[464px] flex-col">
            <nav className="flex h-[17px] gap-[9px] pl-1.5 text-sm leading-[17px] text-slate-500">
              <span className="text-black">Direzione 1</span>
              <span>Direzione 2</span>
              <span>Direzione 3</span>
            </nav>
            <div className="h-px w-full bg-slate-500">
              <div className="h-px w-[55px] bg-black" />
            </div>

            <div className="mt-3 flex flex-1">
              <div className="flex w-[225px] flex-col pl-3">
                <h2 className="h-6 text-xl leading-6 font-[385] tracking-[0.08px]">Fermate</h2>
                <ul className="mt-1 flex w-44 flex-col gap-1.5">
                  <StopRow name="Fermata 1" gap="ml-[7px]" />
                  <StopRow name="Fermata 2" gap="ml-[5px]" />
                  <StopRow name="Fermata 3" gap="ml-1" />
                </ul>
                <button className="mt-3 flex h-[19px] w-[130px] rounded-[2px] bg-slate-200 pl-0.5 text-sm">
                  <svg viewBox="0 0 16 16" className="mt-0.5 h-4 w-4 shrink-0" stroke="#111" strokeWidth="1.5">
                    <path d="M0.500 8H15.500M8 0.500V15.500" />
                  </svg>
                  <span className="mt-3 ml-[3px] leading-[18px] tracking-[0.08px] whitespace-nowrap text-slate-950">
                    Aggiunti fermata esistente
                  </span>
                </button>
                <button className="mt-auto -ml-1.5 h-[18px] w-[122px] rounded-[2px] bg-slate-800 text-sm leading-[18px] whitespace-nowrap text-slate-50">
                  Genera percorso
                </button>
              </div>
              <div className="flex flex-1 flex-col border-l border-slate-500 pl-[25px]">
                <h2 className="mt-1 h-6 text-xl leading-6 font-[385]">Tempi di percorrenza</h2>
                <div className="pl-px">
                  <Timeline />
                </div>
              </div>
            </div>
          </section>
        </main>

        <footer className="mt-[19px] flex justify-between pr-7 pl-[68px] text-sm">
          <button className="flex h-[19px] w-[81px] items-center rounded-[2px] bg-slate-200 pl-1 text-slate-950">
            <svg viewBox="0 0 16 14" className="h-3.5 w-4" fill="none" stroke="#0f172a" strokeWidth="1.6">
              <path d="M15.500 7H1M7 0.600L1 7L7 13.400" />
            </svg>
            <span className="ml-1">Indietro</span>
          </button>
          <button className="flex h-[19px] w-[68px] items-center rounded-[2px] bg-slate-800 pl-1 text-slate-50">
            <span className="pt-0.5">Avanti</span>
            <svg viewBox="0 0 16 14" className="ml-[3px] h-3.5 w-4" fill="none" stroke="#f8fafc" strokeWidth="1.6">
              <path d="M0.500 7H15M9 0.600L15 7L9 13.400" />
            </svg>
          </button>
        </footer>
      </div>
    </div>
  );
}
